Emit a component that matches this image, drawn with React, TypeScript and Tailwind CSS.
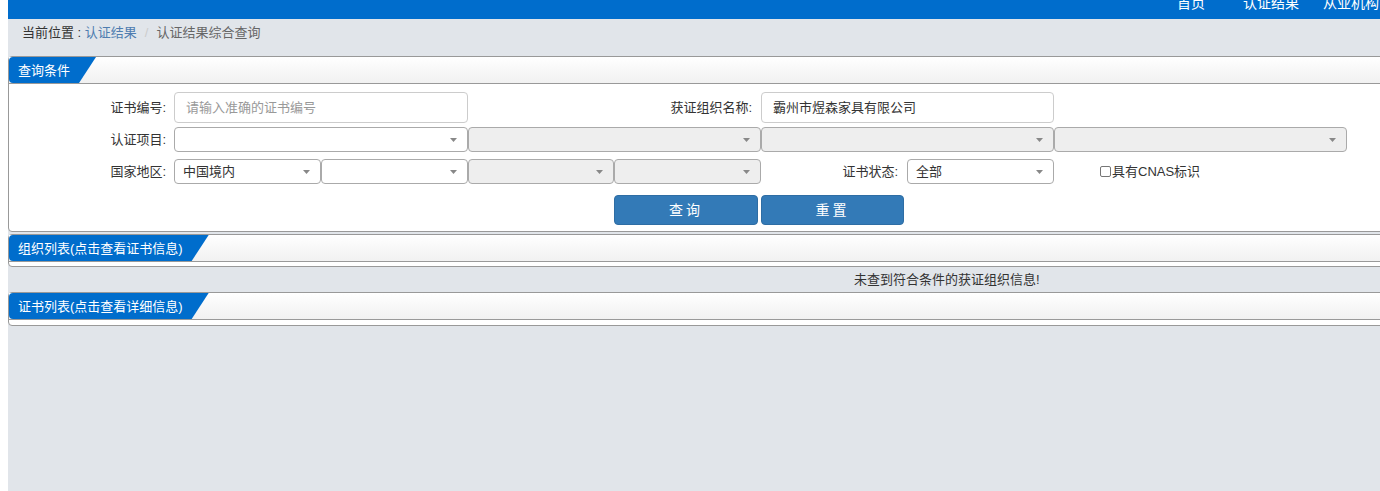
const font = { fontFamily: '"Liberation Sans", "Noto Sans CJK SC", sans-serif' };

function Tab({ title }: { title: string }) {
  return (
    <div className="h-[27px] border-b border-[#999] bg-gradient-to-b from-white to-[#f1f1f1]">
      <div className="inline-flex h-full items-center rounded-tl-[4px] rounded-bl-[4px] bg-[#006dcc] pl-[9px] pr-[26px] text-[13px] leading-none text-white [clip-path:polygon(0_0,100%_0,calc(100%-17px)_100%,0_100%)]">
        {title}
      </div>
    </div>
  );
}

function Arrow() {
  return (
    <svg width="7" height="4" viewBox="0 0 7 4" className="absolute right-[10px] top-1/2 -translate-y-1/2">
      <path d="M0 0H7L3.5 4Z" fill="#888" />
    </svg>
  );
}

function Select({ w, value, disabled }: { w: string; value?: string; disabled?: boolean }) {
  return (
    <div
      className={`relative flex h-[25px] shrink-0 items-center rounded-[4px] border border-[#aaa] pl-[8px] text-[13px] text-[#333] ${w} ${
        disabled ? 'bg-[#eee]' : 'bg-white'
      }`}
    >
      {value}
      <Arrow />
    </div>
  );
}

function Label({ w, children }: { w: string; children: string }) {
  return <div className={`shrink-0 text-right text-[13px] text-[#333] ${w}`}>{children}</div>;
}

export default function App() {
  return (
    <div className="h-[491px] w-[1380px] overflow-hidden bg-white" style={font}>
      <div className="ml-2 h-full w-[1420px] bg-[#e1e5ea]">
        {/* top nav, scrolled so the labels sit half out of view */}
        <div className="flex h-[19px] overflow-hidden bg-[#006dcc] pl-[1143px]">
          {['首页', '认证结果', '从业机构'].map((t) => (
            <div key={t} className="-mt-[4px] w-[80px] shrink-0 text-center text-[14px] leading-[14px] text-white">
              {t}
            </div>
          ))}
        </div>

        {/* breadcrumb */}
        <div className="flex h-[37px] items-start pl-[14px] pt-[6px] text-[13px] leading-[16px]">
          <span className="text-[#333]">当前位置 :&nbsp;</span>
          <span className="text-[#4f7db0]">认证结果</span>
          <span className="px-[8px] text-[#ccc]">/</span>
          <span className="text-[#666]">认证结果综合查询</span>
        </div>

        {/* query panel */}
        <div className="w-[1400px] rounded-[4px] border border-[#999] bg-white">
          <Tab title="查询条件" />
          <div className="pb-[6px] pt-[8px]">
            <div className="flex h-[31px] items-center">
              <Label w="w-[157px] mr-[8px]">证书编号:</Label>
              <div className="flex h-[31px] w-[294px] items-center rounded-[4px] border border-[#ccc] pl-[11px] text-[13px] text-[#999]">
                请输入准确的证书编号
              </div>
              <Label w="w-[284px] mr-[9px]">获证组织名称:</Label>
              <div className="flex h-[31px] w-[293px] items-center rounded-[4px] border border-[#ccc] pl-[11px] text-[13px] text-[#333]">
                霸州市煜森家具有限公司
              </div>
            </div>

            <div className="mt-[4px] flex items-center">
              <Label w="w-[157px] mr-[8px]">认证项目:</Label>
              <Select w="w-[294px]" />
              <Select w="w-[293px]" disabled />
              <Select w="w-[293px]" disabled />
              <Select w="w-[293px]" disabled />
            </div>

            <div className="mt-[7px] flex items-center">
              <Label w="w-[157px] mr-[8px]">国家地区:</Label>
              <Select w="w-[147px]" value="中国境内" />
              <Select w="w-[147px]" />
              <Select w="w-[146px]" disabled />
              <Select w="w-[147px]" disabled />
              <Label w="w-[137px] mr-[9px]">证书状态:</Label>
              <Select w="w-[147px]" value="全部" />
              <div className="ml-[46px] flex items-center text-[13px] text-[#333]">
                <span className="mr-px inline-block h-[11px] w-[11px] rounded-[2px] border border-[#767676] bg-white" />
                具有CNAS标识
              </div>
            </div>

            <div className="mt-[11px] flex pl-[605px]">
              <button className="h-[30px] w-[144px] rounded-[4px] border border-[#2e6da4] bg-[#337ab7] text-[14px] tracking-[3px] text-white">
                查询
              </button>
              <button className="ml-[3px] h-[30px] w-[143px] rounded-[4px] border border-[#2e6da4] bg-[#337ab7] text-[14px] tracking-[3px] text-white">
                重置
              </button>
            </div>
          </div>
        </div>

        {/* organization list */}
        <div className="mt-[2px] w-[1400px] rounded-[4px] border border-[#999] bg-white">
          <Tab title="组织列表(点击查看证书信息)" />
          <div className="h-[4px]" />
        </div>
        <div className="flex h-[25px] items-center pl-[846px] text-[13px] text-[#333]">
          未查到符合条件的获证组织信息!
        </div>

        {/* certificate list */}
        <div className="w-[1400px] rounded-[4px] border border-[#999] bg-white">
          <Tab title="证书列表(点击查看详细信息)" />
          <div className="h-[5px]" />
        </div>
      </div>
    </div>
  );
}
